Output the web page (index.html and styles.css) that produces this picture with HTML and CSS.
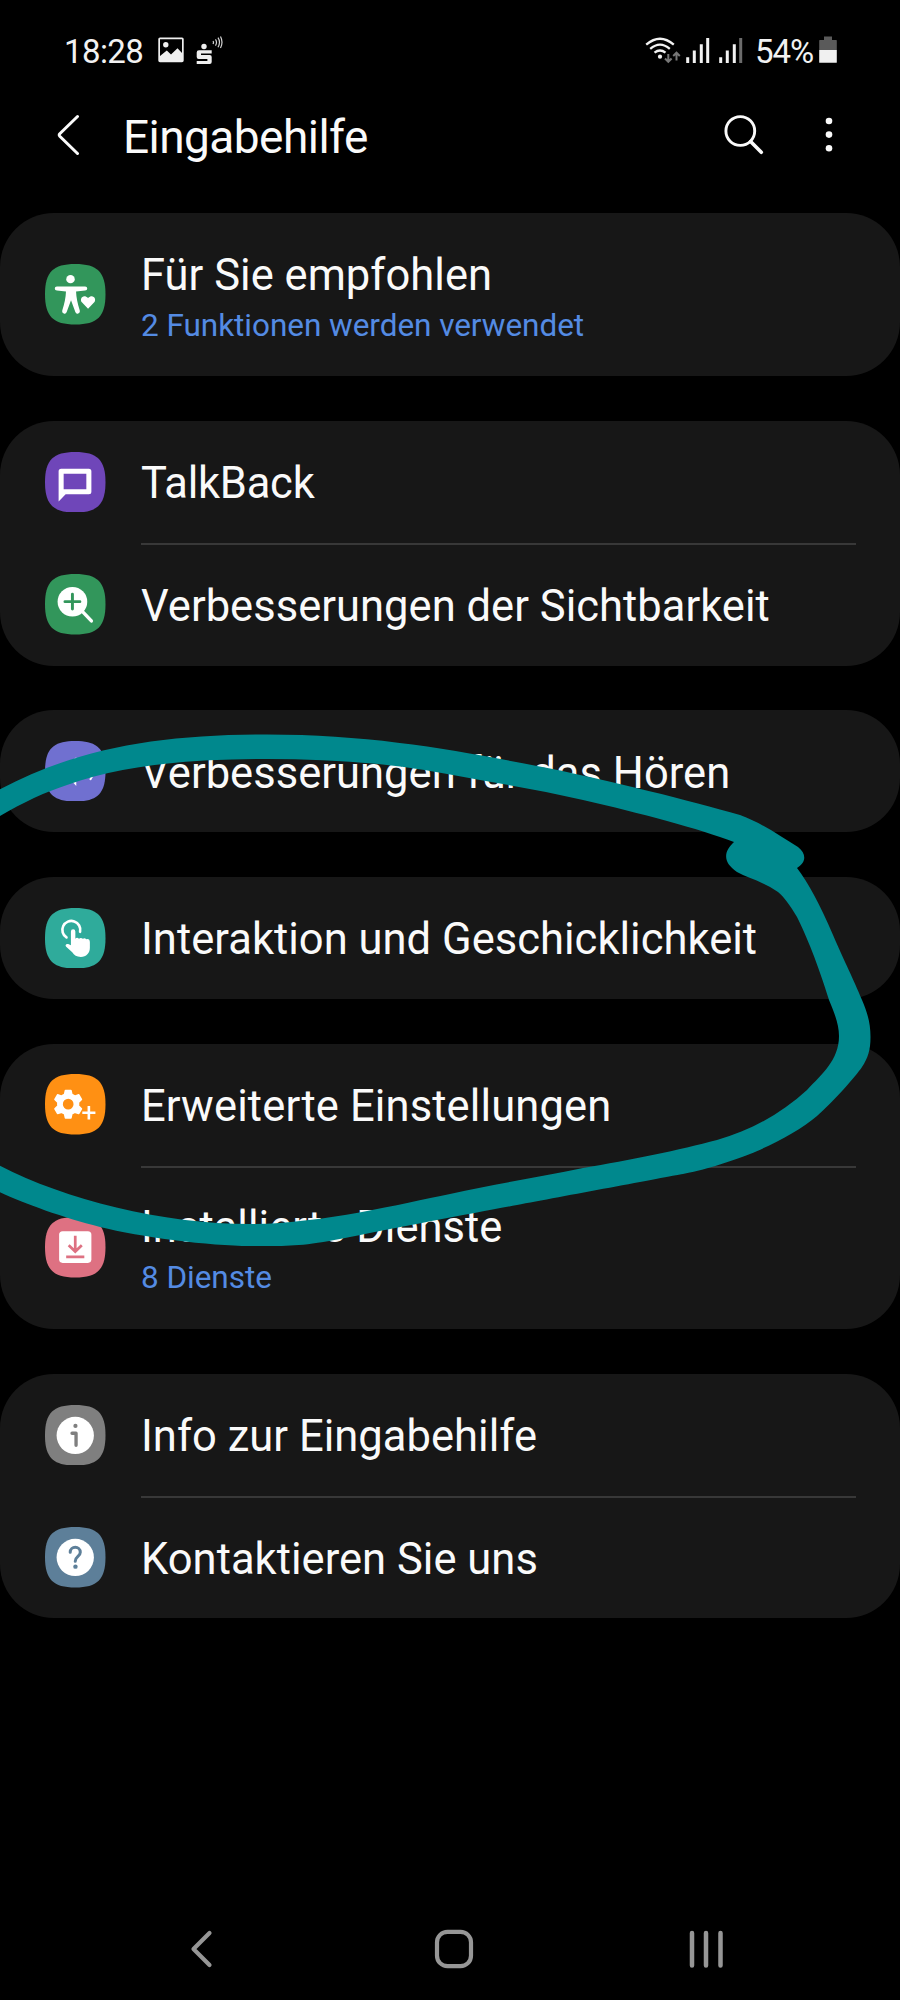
FILE: index.html
```html
<!DOCTYPE html>
<html lang="de">
<head>
<meta charset="utf-8">
<title>Eingabehilfe</title>
<link rel="stylesheet" href="styles.css">
</head>
<body>
<div class="screen">
  <div class="status">
    <div class="status-left">
      <span class="clock">18:28</span>
      <svg class="ic-image" viewBox="0 0 26 26"><path fill="#efefef" fill-rule="evenodd" d="M2 .4h22a1.7 1.7 0 0 1 1.7 1.7v21.500a1.700 1.700 0 0 1-1.700 1.700H2a1.700 1.700 0 0 1-1.700-1.700V2.100A1.700 1.700 0 0 1 2 .4zM2 2.200V19l6.800-5.500 4.200 4 6.500-6.300L24 16V2.200z"/><circle cx="7.800" cy="7.800" r="2.700" fill="#efefef"/></svg>
      <svg class="ic-bank" viewBox="0 0 28 30"><g fill="#efefef"><circle cx="9" cy="11.500" r="2.700"/><path d="M4 15.300h12.700v3.200H6v1.600h8.700a2 2 0 0 1 2 2v5a2 2 0 0 1-2 2H1.700v-3.200h10.700v-1.900H3.700a2 2 0 0 1-2-2v-4.400a2.300 2.300 0 0 1 2.300-2.300z"/></g><path d="M18 6q1 1.500 0 3M20.500 4.300q2 3 0 6.300M23 2.700q3 4.500 0 9.500M25.500 1.500q3 5.700 0 11.500" fill="none" stroke="#d5d5d5" stroke-width="1.200"/></svg>
    </div>
    <div class="status-right">
      <svg class="ic-wifi" viewBox="0 0 36 28"><g fill="none" stroke="#f2f2f2" stroke-width="2.300"><path d="M1.200 8.700q13.800-12 27.600 0"/><path d="M5.200 12.800q9.800-8.400 19.600 0"/><path d="M9.500 16.700q5.500-4.400 11 0"/></g><circle cx="15" cy="20.700" r="2.100" fill="#f2f2f2"/><path d="M23.300 18v7.500M20 22.500l3.300 3.300 3.300-3.300M31.500 24.500v-7M28.200 20l3.300-3.300L34.800 20" fill="none" stroke="#777" stroke-width="2"/></svg>
      <svg class="ic-signal" viewBox="0 0 24 26"><path d="M1.700 20.200V26M8.300 13.500V26M15.300 7.200V26M21.700 1V26" stroke="#f2f2f2" stroke-width="3"/></svg>
      <svg class="ic-signal" viewBox="0 0 24 26"><path d="M1.700 20.200V26M8.300 13.500V26M15.300 7.200V26" stroke="#f2f2f2" stroke-width="3"/><path d="M21.700 1V26" stroke="#6c6c6c" stroke-width="3"/></svg>
      <span class="percent">54%</span>
      <svg class="ic-battery" viewBox="0 0 18 27"><path d="M5 .4h8V4h4.200a.6.6 0 0 1 .6.6V14H.2V4.600A.6.6 0 0 1 .8 4H5z" fill="#5a5a5a"/><path d="M.2 14h17.600v12.200a.6.6 0 0 1-.6.6H.8a.6.6 0 0 1-.6-.6z" fill="#f0f0f0"/></svg>
    </div>
  </div>

  <header class="header">
    <svg class="ic-back" viewBox="0 0 24 44"><path d="M20.500 3.500 2.800 20.800q-1.100 1.200 0 2.400L20.500 40.500" fill="none" stroke="#fafafa" stroke-width="3" stroke-linecap="round"/></svg>
    <h1 class="title">Eingabehilfe</h1>
    <svg class="ic-search" viewBox="0 0 44 44"><circle cx="18.300" cy="18" r="14.400" fill="none" stroke="#fafafa" stroke-width="2.900"/><path d="m28.600 28.600 10.700 10.700" stroke="#fafafa" stroke-width="3.600" stroke-linecap="round"/></svg>
    <svg class="ic-more" viewBox="0 0 10 40"><g fill="#fafafa"><circle cx="5" cy="6" r="3.300"/><circle cx="5" cy="19.600" r="3.300"/><circle cx="5" cy="33.200" r="3.300"/></g></svg>
  </header>

  <main class="list">
    <section class="card">
      <div class="row row-tall">
        <svg class="icon" viewBox="0 0 60 60"><path class="green" d="M30 0C52 0 60 8 60 30S52 60 30 60 0 52 0 30 8 0 30 0z"/><g fill="#fff"><circle cx="25.300" cy="15" r="4.200"/><path d="M11.800 22.200h28a2.100 2.100 0 0 1 0 4.200l-9 .8c.2 6 1.600 12 3.700 19a2.300 2.300 0 0 1-4.400 1.500L25.800 36l-4.300 11.700a2.300 2.300 0 0 1-4.400-1.500c2.200-7 3.500-13 3.700-19l-9-.8a2.100 2.100 0 0 1 0-4.200z"/><path d="M42.700 44.300l-5.900-6c-3.200-3.500 1-9.200 5.900-4.700 4.900-4.500 9.100 1.200 5.900 4.700z"/></g></svg>
        <div class="text"><div class="label">Für Sie empfohlen</div><div class="sub">2 Funktionen werden verwendet</div></div>
      </div>
    </section>

    <section class="card">
      <div class="row">
        <svg class="icon" viewBox="0 0 60 60"><path class="violet" d="M30 0C52 0 60 8 60 30S52 60 30 60 0 52 0 30 8 0 30 0z"/><path fill="#fff" fill-rule="evenodd" d="M16 16.500h27.500a2.500 2.500 0 0 1 2.500 2.500v20.500a2.500 2.500 0 0 1-2.500 2.500H20.500l-7 7V19a2.500 2.500 0 0 1 2.500-2.500zM18.500 21.500v15.500h22.500v-15.500z"/></svg>
        <div class="text"><div class="label label-tight">TalkBack</div></div>
      </div>
      <div class="row divided">
        <svg class="icon" viewBox="0 0 60 60"><path class="green" d="M30 0C52 0 60 8 60 30S52 60 30 60 0 52 0 30 8 0 30 0z"/><circle cx="27.200" cy="27.500" r="14.700" fill="#fff"/><path class="green-line" d="M27.200 20v14.800M19.800 27.400h14.800" stroke-width="2.900" stroke-linecap="round"/><path d="m37 37 9 9.500" stroke="#fff" stroke-width="3.400" stroke-linecap="round"/></svg>
        <div class="text"><div class="label">Verbesserungen der Sichtbarkeit</div></div>
      </div>
    </section>

    <section class="card">
      <div class="row">
        <svg class="icon" viewBox="0 0 60 60"><path class="indigo" d="M30 0C52 0 60 8 60 30S52 60 30 60 0 52 0 30 8 0 30 0z"/><path d="M31 16v28.700L29 42.500 20.500 34H15v-9.500h5.500z" fill="#fff"/><path d="M37 24q3 3.500 0 7M43 21q8 9 2.200 16.800" fill="none" stroke="#fff" stroke-width="2" stroke-linecap="round"/></svg>
        <div class="text"><div class="label">Verbesserungen für das Hören</div></div>
      </div>
    </section>

    <section class="card">
      <div class="row">
        <svg class="icon" viewBox="0 0 60 60"><path class="teal" d="M30 0C52 0 60 8 60 30S52 60 30 60 0 52 0 30 8 0 30 0z"/><path d="M21.300 29.200A8.900 8.900 0 1 1 34.800 23.600" fill="none" stroke="#fff" stroke-width="2.600" stroke-linecap="round"/><path d="M25.700 23.200a2.200 2.200 0 0 1 4.400 0v7.200q1.600-1.700 3.600 0 2-1.500 3.800.2 2-1.200 3.400.4 3.600-.8 3.600 3.200v5.300c0 5.500-3.500 9-9 9-4.300 0-6.500-1.500-8.500-4.500l-6-5.500c-1.500-1.700.1-3.500 2-2.700l2.700 1.200z" fill="#fff"/></svg>
        <div class="text"><div class="label">Interaktion und Geschicklichkeit</div></div>
      </div>
    </section>

    <section class="card">
      <div class="row">
        <svg class="icon" viewBox="0 0 60 60"><path class="orange" d="M30 0C52 0 60 8 60 30S52 60 30 60 0 52 0 30 8 0 30 0z"/><path fill="#fff" fill-rule="evenodd" stroke="#fff" stroke-width="1.600" stroke-linejoin="round" d="M20.300 16.300h5.400l.9 4a10 10 0 0 1 2.900 1.700l4-1.300 2.600 4.600-3 2.900a10 10 0 0 1 0 3.400l3 2.900-2.600 4.600-4-1.300a10 10 0 0 1-2.900 1.700l-.9 4h-5.400l-.9-4a10 10 0 0 1-2.900-1.700l-4 1.300-2.600-4.600 3-2.900a10 10 0 0 1 0-3.400l-3-2.900 2.600-4.600 4 1.300a10 10 0 0 1 2.900-1.700zM23 23.800a6.100 6.100 0 1 0 0 12.200 6.100 6.100 0 0 0 0-12.200z"/><path d="M43.500 31.800V45M37 38.400h13" stroke="#fff" stroke-width="2.600"/></svg>
        <div class="text"><div class="label label-wide">Erweiterte Einstellungen</div></div>
      </div>
      <div class="row row-tall divided">
        <svg class="icon" viewBox="0 0 60 60"><path class="pink" d="M30 0C52 0 60 8 60 30S52 60 30 60 0 52 0 30 8 0 30 0z"/><rect x="14" y="14.200" width="32" height="31.300" rx="3.500" fill="#fff"/><path class="pink-line" d="M30 18.500v15M23.500 28l6.500 6.300 6.500-6.300M21 39.500h18" fill="none" stroke-width="2.700"/></svg>
        <div class="text"><div class="label">Installierte Dienste</div><div class="sub">8 Dienste</div></div>
      </div>
    </section>

    <section class="card">
      <div class="row">
        <svg class="icon" viewBox="0 0 60 60"><path class="gray" d="M30 0C52 0 60 8 60 30S52 60 30 60 0 52 0 30 8 0 30 0z"/><circle cx="30" cy="30.200" r="18.500" fill="#fff"/><circle class="gray" cx="30.200" cy="20.800" r="2.100"/><path class="gray-line" d="M26.800 28h4v12" fill="none" stroke-width="3.300" stroke-linecap="round" stroke-linejoin="round"/></svg>
        <div class="text"><div class="label">Info zur Eingabehilfe</div></div>
      </div>
      <div class="row divided">
        <svg class="icon" viewBox="0 0 60 60"><path class="slate" d="M30 0C52 0 60 8 60 30S52 60 30 60 0 52 0 30 8 0 30 0z"/><circle cx="30" cy="30.200" r="18.500" fill="#fff"/><path class="slate-line" d="M25 25c0-6.500 10-6.500 10 0 0 4.300-5 4-5 9" fill="none" stroke-width="3" stroke-linecap="round"/><circle class="slate" cx="30.200" cy="39.300" r="2.200"/></svg>
        <div class="text"><div class="label">Kontaktieren Sie uns</div></div>
      </div>
    </section>
  </main>

  <nav class="nav">
    <svg class="nav-back" viewBox="0 0 24 40"><path d="M19.500 4 3.500 20l16 16" fill="none" stroke="#969696" stroke-width="4.200" stroke-linecap="round" stroke-linejoin="round"/></svg>
    <svg class="nav-home" viewBox="0 0 40 40"><rect x="3" y="2.800" width="34" height="34.400" rx="10.500" fill="none" stroke="#969696" stroke-width="4.200"/></svg>
    <svg class="nav-recents" viewBox="0 0 36 40"><path d="M4 4v32.500M18 4v32.500M32.500 4v32.500" stroke="#969696" stroke-width="4.500" stroke-linecap="round"/></svg>
  </nav>

  <!-- Freehand marker loop around the middle entries -->
  <svg class="marker" viewBox="0 0 900 2000"><path fill="#00888d" d="M-5 792C75 748 160 734.500 267 734.500S460 751 537 766 690 801 740 815C762 823 780 836 798 847 806 853 807 862 797 868 808 882 820 905 833 935S853 978 862 1000C867 1012 870.500 1022 870.500 1037 870.500 1050 868 1058 862 1067S833 1102 817 1116 770 1146 750 1154 700 1171 683 1174 560 1197 517 1205 400 1227 350 1237 290 1246 250 1246 140 1237 100 1227 20 1202-5 1190V1163C60 1198 160 1224 250 1224 320 1224 400 1204 450 1194 495 1184 540 1177 583 1168 630 1160 680 1150 717 1140 752 1130 782 1113 807 1090 822 1074 839 1060 839 1036 839 1024 834 1012 829 1000 818 964 806 935 797 917 790 905 784 897 778 892 764 882 748 878 737 872 722 862 724 851 734 842 700 829 640 813 583 800 540 790 495 783 450 774.500 390 763 330 759 267 759 195 759 125 764 67 785 45 792 20 804-5 819z"/></svg>
</div>
</body>
</html>
```
FILE: styles.css
```css
* { box-sizing: border-box; }
body { margin: 0; background: #000; font-family: Roboto, "Noto Sans", sans-serif; color: #fafafa; }
svg { display: block; flex: none; }
.screen { position: relative; width: 900px; height: 2000px; overflow: hidden; background: #000; display: flex; flex-direction: column; }

.status { height: 100px; flex: none; display: flex; justify-content: space-between; padding: 0 63px 0 64px; }
.status-left, .status-right { display: flex; align-items: flex-start; }
.clock, .percent { font-size: 33px; line-height: 40px; margin-top: 32px; color: #f2f2f2; white-space: nowrap; }
.clock { width: 93.500px; letter-spacing: -0.600px; }
.percent { width: 64px; margin-left: 12px; letter-spacing: -1px; }
.ic-image { width: 26px; height: 26px; margin-top: 37px; }
.ic-bank { width: 28px; height: 30px; margin: 34.500px 0 0 11.500px; }
.ic-wifi { width: 36px; height: 28px; margin-top: 35.500px; }
.ic-signal { width: 24px; height: 26px; margin: 37px 0 0 5px; }
.ic-signal + .ic-signal { margin-left: 9px; }
.ic-battery { width: 18px; height: 27px; margin-top: 36px; }

.header { height: 113px; flex: none; display: flex; align-items: flex-start; padding: 12px 66px 0 57px; }
.ic-back { width: 24px; height: 44px; margin-top: 1px; }
.title { flex: 1; margin: -3px 0 0 42px; font-size: 46px; line-height: 56px; font-weight: 400; letter-spacing: -0.550px; }
.ic-search { width: 44px; height: 44px; margin: 1px 58px 0 0; }
.ic-more { width: 10px; height: 40px; margin: 3px 0 0; }

.list { flex: 1; display: flex; flex-direction: column; gap: 44.400px; }
.card { background: #171717; border-radius: 54px; }
.row { height: 122.400px; display: flex; align-items: center; padding: 0 44px 0 45px; }
.row-tall { height: 163.400px; }
.icon { width: 60.500px; height: 60.500px; margin-right: 35.500px; }
.text { flex: 1; align-self: stretch; padding-top: 35.700px; }
.row-tall .text { padding-top: 34.700px; }
.divided .text { border-top: 2px solid #383838; padding-top: 33.700px; }
.row-tall.divided .text { padding-top: 32.500px; }
.label { font-size: 43.500px; line-height: 56px; white-space: nowrap; letter-spacing: 0.030px; }
.label-tight { letter-spacing: -0.250px; }
.label-wide { letter-spacing: 0.140px; }
.sub { font-size: 31.500px; line-height: 44px; color: #548be3; white-space: nowrap; letter-spacing: -0.040px; }

.green { fill: #32965b; }
.green-line { stroke: #32965b; }
.violet { fill: #6f46b9; }
.indigo { fill: #7070d0; }
.teal { fill: #2fab9b; }
.orange { fill: #ff9013; }
.pink { fill: #de7182; }
.pink-line { stroke: #de7182; }
.gray { fill: #7f7f7f; }
.gray-line { stroke: #7f7f7f; }
.slate { fill: #5d7f99; }
.slate-line { stroke: #5d7f99; }

.nav { height: 71px; flex: none; display: flex; align-items: flex-start; padding-left: 190px; }
.nav-back { width: 24px; height: 40px; }
.nav-home { width: 40px; height: 40px; margin-left: 220px; }
.nav-recents { width: 36px; height: 40px; margin-left: 214px; }

.marker { position: absolute; left: 0; top: 0; width: 900px; height: 2000px; pointer-events: none; }
```
